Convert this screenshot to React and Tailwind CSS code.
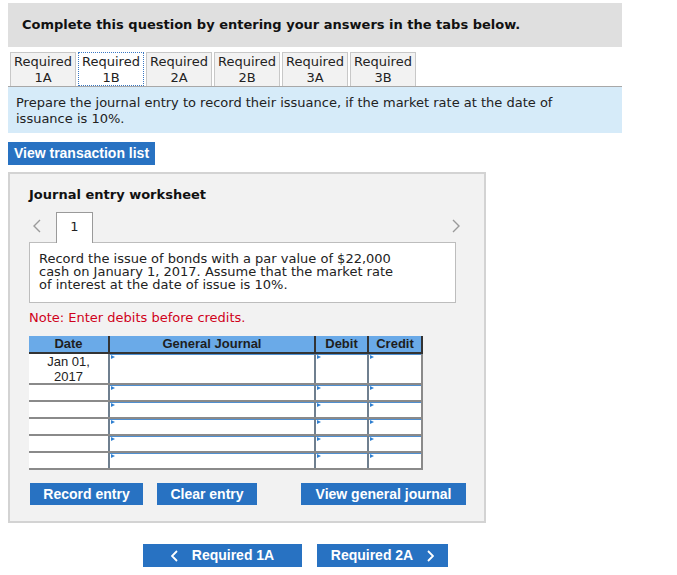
import React from "react";

const verdana = { fontFamily: '"DejaVu Sans", Verdana, sans-serif' };
const arial = { fontFamily: '"Liberation Sans", Arial, sans-serif' };

const tabs = ["1A", "1B", "2A", "2B", "3A", "3B"];

// Little blue marker in the top-left corner of every input cell
const Marker = () => (
  <svg className="absolute left-[1px] top-[1px]" width="4" height="4" viewBox="0 0 4 4">
    <polygon points="0,0 4,2 0,4" fill="#2f7fd0" />
  </svg>
);

const InputCell = ({ w }) => (
  <div className={`relative ${w} border-l-2 border-[#6f7f8f] bg-white`}>
    <div className="absolute inset-x-0 top-0 h-[1px] bg-[#4f8fd0]" />
    <Marker />
  </div>
);

const Row = ({ tall, date }) => (
  <div
    className={`flex border-b-2 border-[#8a8a8a] ${tall ? "h-[31px]" : "h-[17px]"}`}
  >
    <div
      className="w-[79px] bg-white text-center text-[13px] leading-[15px] text-[#222]"
      style={arial}
    >
      {date}
    </div>
    <InputCell w="w-[206px]" />
    <InputCell w="w-[53px]" />
    <InputCell w="w-[54px]" />
    <div className="w-[2px] bg-[#8a8a8a]" />
  </div>
);

const BlueBtn = ({ children, className = "" }) => (
  <button
    className={`shrink-0 h-[22px] bg-[#2872c2] text-white text-[14px] font-bold ${className}`}
    style={arial}
  >
    {children}
  </button>
);

export default function App() {
  return (
    <div className="w-[677px] h-[575px] bg-white pl-[8px] pt-[3px]" style={verdana}>
      {/* header */}
      <div className="w-[614px] h-[44px] bg-[#dfdfdf] pl-[14px] pt-[14px] text-[13px] leading-[16px] font-bold text-[#111]">
        Complete this question by entering your answers in the tabs below.
      </div>

      {/* tabs */}
      <div className="mt-[5px] flex pl-[2px]">
        {tabs.map((t, i) => (
          <div
            key={t}
            className={`mr-[2px] w-[66px] h-[34px] text-center text-[13px] leading-[16px] text-[#222] pt-[1px] ${
              i === 1
                ? "bg-white border border-dotted border-[#3a78c3]"
                : "bg-[#f2f2f2] border border-b-0 border-[#c8c8c8]"
            }`}
          >
            Required
            <br />
            {t}
          </div>
        ))}
      </div>

      {/* instructions */}
      <div className="w-[614px] h-[47px] bg-[#d6ebf9] border-t border-[#a8a8a8] px-[8px] pt-[8px] text-[13px] leading-[16px] text-[#222]">
        Prepare the journal entry to record their issuance, if the market rate at the date of
        <br />
        issuance is 10%.
      </div>

      <BlueBtn className="mt-[9px] w-[147px] h-[23px]">View transaction list</BlueBtn>

      {/* worksheet */}
      <div className="mt-[7px] w-[478px] h-[351px] border-2 border-[#d3d3d3] bg-[#f2f2f2] pl-[19px] pr-[19px]">
        <div className="pt-[13px] text-[13px] leading-[16px] font-bold text-[#111]">
          Journal entry worksheet
        </div>

        <div className="mt-[9px] flex items-end w-[431px]">
          <svg className="mb-[9px] ml-[4px]" width="8" height="14" viewBox="0 0 8 14">
            <polyline points="7,1 1,7 7,13" fill="none" stroke="#9a9a9a" strokeWidth="1.4" />
          </svg>
          <div className="ml-[15px] -mb-[1px] relative z-10 w-[37px] h-[31px] bg-white border border-b-0 border-[#9a9a9a] text-center text-[13px] leading-[28px] text-[#222]">
            1
          </div>
          <div className="flex-1" />
          <svg className="mb-[9px]" width="8" height="14" viewBox="0 0 8 14">
            <polyline points="1,1 7,7 1,13" fill="none" stroke="#9a9a9a" strokeWidth="1.4" />
          </svg>
        </div>
        <div className="w-[427px] h-[61px] bg-white border border-[#bdbdbd] pl-[9px] pt-[9px] text-[13px] leading-[13px] text-[#222]">
          Record the issue of bonds with a par value of $22,000
          <br />
          cash on January 1, 2017. Assume that the market rate
          <br />
          of interest at the date of issue is 10%.
        </div>

        <div className="mt-[7px] text-[13px] leading-[16px] text-[#d0021b]">
          Note: Enter debits before credits.
        </div>

        {/* journal table */}
        <div className="mt-[10px] w-[394px]">
          <div
            className="flex h-[18px] bg-[#6aaae8] border-b-2 border-[#333] text-[13px] font-bold text-[#1e1e1e] leading-[16px]"
            style={arial}
          >
            <div className="w-[79px] text-center">Date</div>
            <div className="w-[206px] text-center border-l-2 border-[#333]">General Journal</div>
            <div className="w-[53px] text-center border-l-2 border-[#333]">Debit</div>
            <div className="w-[54px] text-center border-l-2 border-[#333]">Credit</div>
            <div className="w-[2px] bg-[#333]" />
          </div>
          <Row tall date={<>Jan 01,<br />2017</>} />
          <Row />
          <Row />
          <Row />
          <Row />
          <Row />
        </div>

        <div className="mt-[13px] flex">
          <BlueBtn className="ml-[1px] w-[113px]">Record entry</BlueBtn>
          <BlueBtn className="ml-[14px] w-[100px]">Clear entry</BlueBtn>
          <BlueBtn className="ml-[44px] w-[165px]">View general journal</BlueBtn>
        </div>
      </div>

      {/* bottom nav */}
      <div className="mt-[21px] flex">
        <BlueBtn className="ml-[135px] w-[159px] h-[23px] flex items-center justify-center gap-[14px]">
          <svg width="7" height="12" viewBox="0 0 7 12">
            <polyline points="6,1 1,6 6,11" fill="none" stroke="white" strokeWidth="1.8" />
          </svg>
          Required 1A
        </BlueBtn>
        <BlueBtn className="ml-[15px] w-[131px] h-[23px] flex items-center justify-center gap-[14px]">
          Required 2A
          <svg width="7" height="12" viewBox="0 0 7 12">
            <polyline points="1,1 6,6 1,11" fill="none" stroke="white" strokeWidth="1.8" />
          </svg>
        </BlueBtn>
      </div>
    </div>
  );
}
